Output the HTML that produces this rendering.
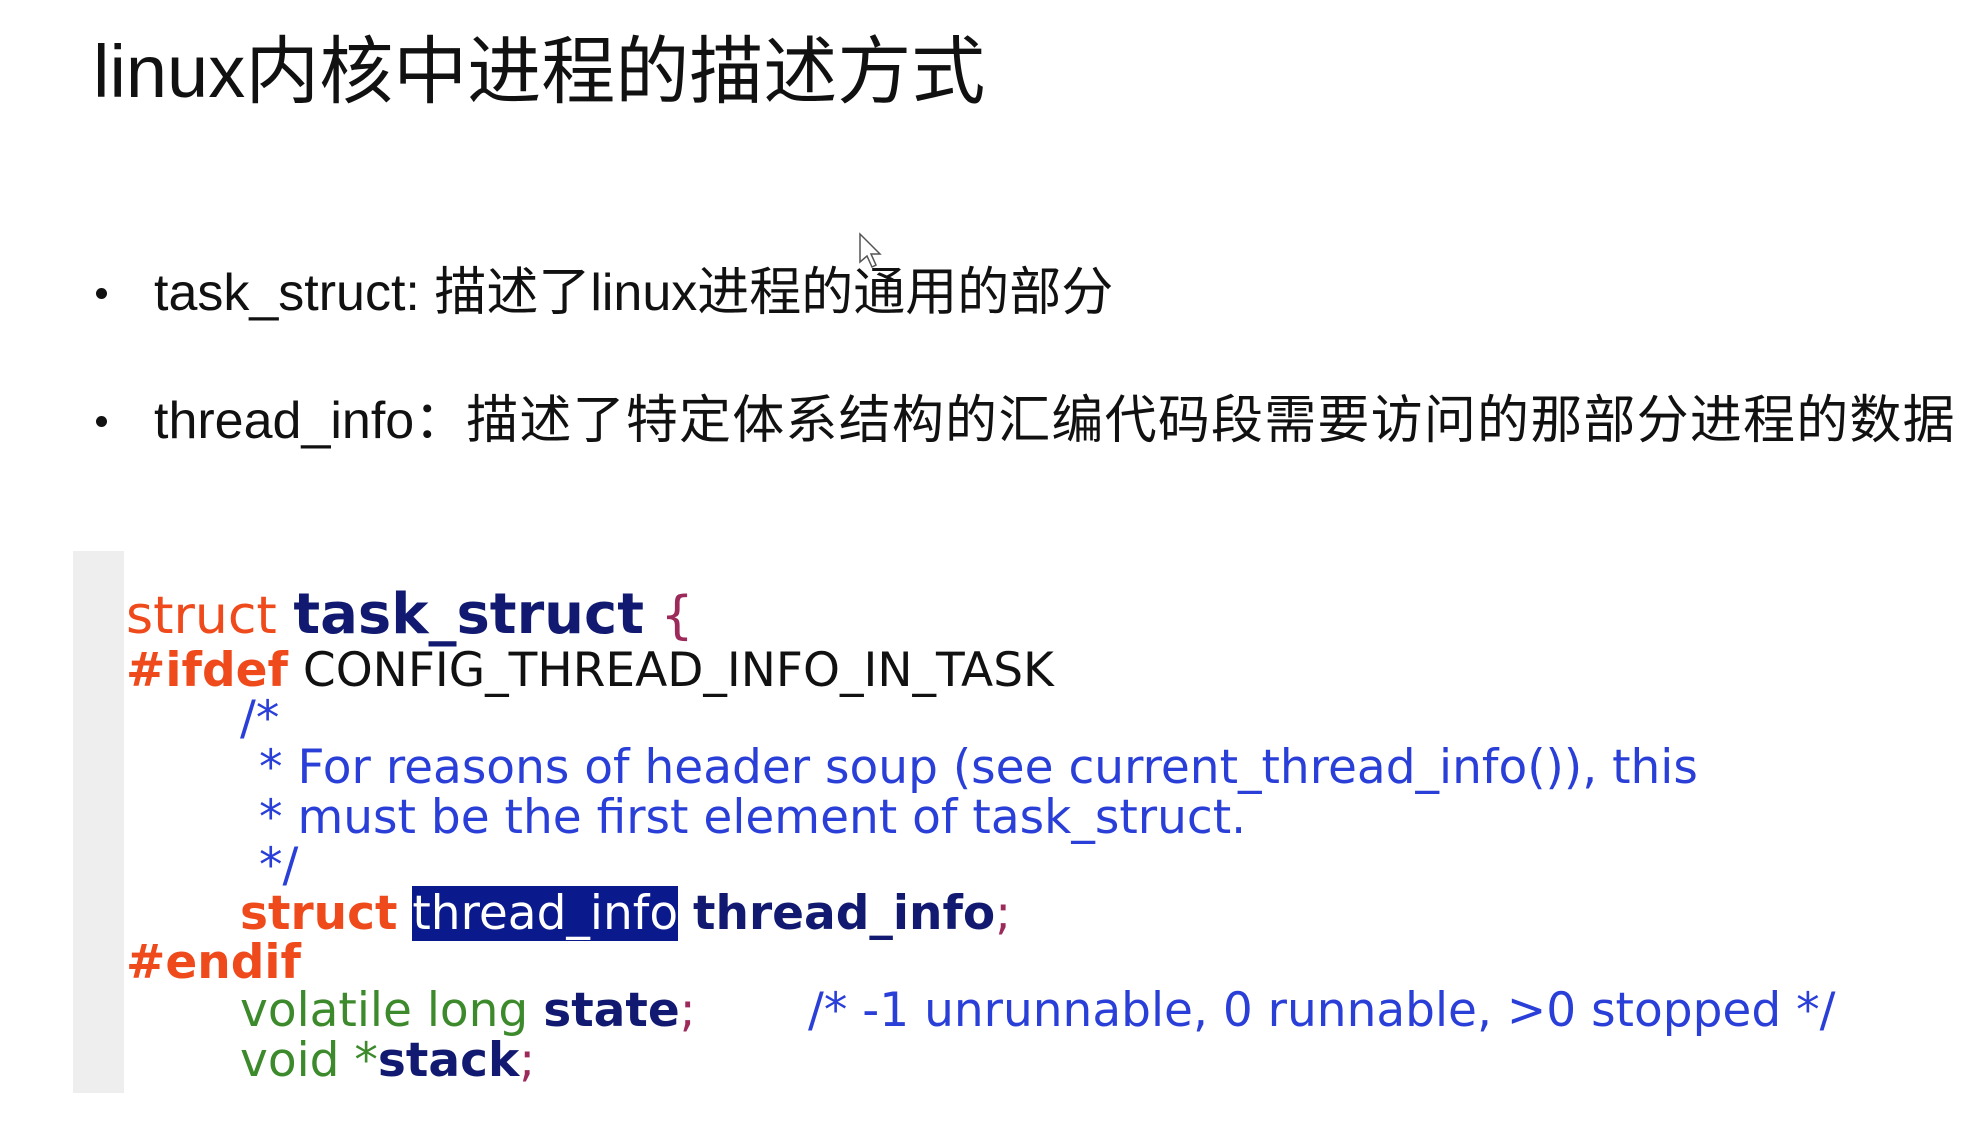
<!DOCTYPE html>
<html><head><meta charset="utf-8"><style>
body{margin:0;width:1973px;height:1132px;background:#fff;position:relative;overflow:hidden;font-family:"Liberation Sans","Noto Sans CJK SC",sans-serif;}
.a{position:absolute;white-space:pre;}
.t{left:93px;top:22px;font-size:74px;line-height:100px;color:#111;}
.b{font-size:52px;line-height:70px;color:#111;}
.dot{position:absolute;width:11px;height:11px;border-radius:50%;background:#111;}
.bar{position:absolute;left:73px;top:551px;width:51px;height:542px;background:#eeeeef;}
.c{left:126px;font-family:"DejaVu Sans",sans-serif;font-size:47px;line-height:50px;}
.i1{left:240px}.i2{left:259px}
.r{color:#ef4a1c}.n{color:#111a70;font-weight:bold}.k{color:#111}.m{color:#2a3fd8}.g{color:#3d8a2c}.p{color:#9c2a5a}
.hl{background:#0a1a8c;color:#fff}
</style></head><body>
<div class="a t">linux内核中进程的描述方式</div>
<div class="dot" style="left:96px;top:288px"></div>
<div class="a b" style="left:154px;top:258px">task_struct: <span>描述了linux进程的通用的部分</span></div>
<div class="dot" style="left:96px;top:416px"></div>
<div class="a b" style="left:154px;top:386px">thread_info：<span style="letter-spacing:1.2px">描述了特定体系结构的汇编代码段需要访问的那部分进程的数据</span></div>
<svg class="a" style="left:858px;top:232px" width="26" height="40" viewBox="0 0 26 40"><path d="M2 2 L2 30 L9 24 L14 35 L18 33 L13 22 L22 22 Z" fill="#fff" stroke="#555" stroke-width="1.5"/></svg>
<div class="bar"></div>
<div class="a c" style="top:586px;font-size:52px;line-height:58px"><span class="r">struct</span> <span class="n" style="font-size:56px">task_struct</span> <span class="p">{</span></div>
<div class="a c" style="top:646px"><span class="r" style="font-weight:bold">#ifdef</span> <span class="k">CONFIG_THREAD_INFO_IN_TASK</span></div>
<div class="a c i1 m" style="top:694px">/*</div>
<div class="a c i2 m" style="top:743px">* For reasons of header soup (see current_thread_info()), this</div>
<div class="a c i2 m" style="top:793px">* must be the first element of task_struct.</div>
<div class="a c i2 m" style="top:841px">*/</div>
<div class="a c i1" style="top:889px"><span class="r" style="font-weight:bold">struct</span> <span class="hl">thread_info</span> <span class="n">thread_info</span><span class="p">;</span></div>
<div class="a c r" style="top:938px;font-weight:bold">#endif</div>
<div class="a c i1" style="top:986px"><span class="g">volatile long</span> <span class="n">state</span><span class="p">;</span></div>
<div class="a c m" style="top:986px;left:808px">/* -1 unrunnable, 0 runnable, &gt;0 stopped */</div>
<div class="a c i1" style="top:1036px"><span class="g">void</span> <span class="g">*</span><span class="n">stack</span><span class="p">;</span></div>
</body></html>
